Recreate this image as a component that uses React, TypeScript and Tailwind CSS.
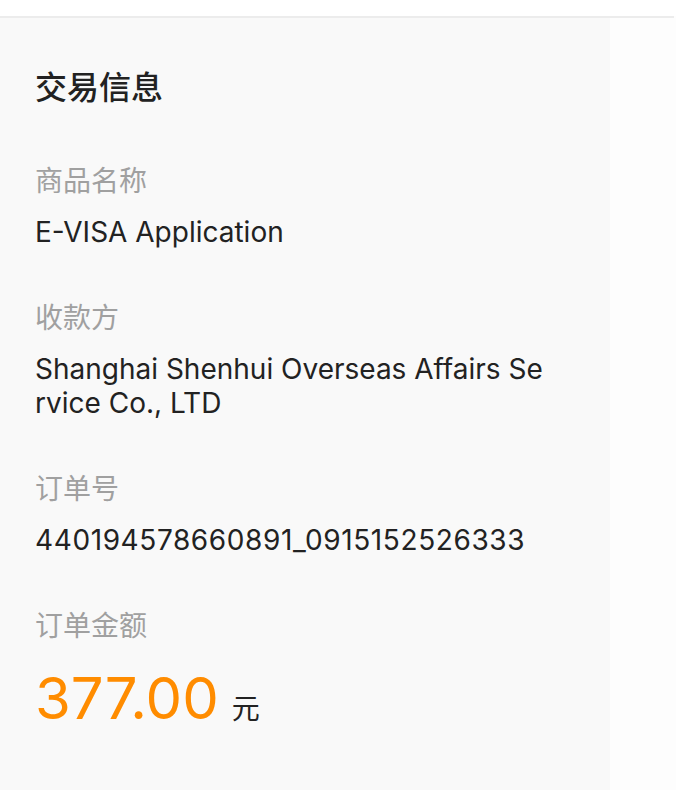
export default function App() {
  const font = { fontFamily: 'Inter, "Noto Sans CJK SC", sans-serif' };
  return (
    <div className="min-h-[790px] w-[676px] bg-[#fdfdfd]" style={font}>
      <div className="h-4 bg-white" />
      <div className="h-[2px] w-[674px] bg-[#ececec]" />
      <div className="flex">
        <div className="w-[610px] min-h-[772px] bg-[#f9f9f9] px-[35px] pt-[50px] text-[#222]">
          <h1 className="text-[32px] leading-[40px] font-medium">交易信息</h1>
          <div className="mt-[56px] flex flex-col">
            <Field label="商品名称" value="E-VISA Application" />
            <Field label="收款方" value="Shanghai Shenhui Overseas Affairs Service Co., LTD" narrow />
            <Field label="订单号" value="440194578660891_0915152526333" mono />
            <div className="flex flex-col">
              <div className="text-[28px] leading-[34px] text-[#a0a0a0]">订单金额</div>
              <div className="mt-[19px] flex items-baseline">
                <span className="text-[58px] leading-[72px] text-[#ff8c00]">377.00</span>
                <span className="ml-[13px] text-[28px] text-[#222]">元</span>
              </div>
            </div>
          </div>
        </div>
        <div className="flex-1" />
      </div>
    </div>
  );
}

function Field({ label, value, narrow, mono }: { label: string; value: string; narrow?: boolean; mono?: boolean }) {
  return (
    <div className="mb-[52px] flex flex-col">
      <div className="text-[28px] leading-[34px] text-[#a0a0a0]">{label}</div>
      <div
        className={
          "mt-[17px] break-all text-[28px] leading-[34px] text-[#222] " +
          (narrow ? "w-[514px] " : "") +
          (mono ? "tracking-[0.6px]" : "")
        }
      >
        {value}
      </div>
    </div>
  );
}
